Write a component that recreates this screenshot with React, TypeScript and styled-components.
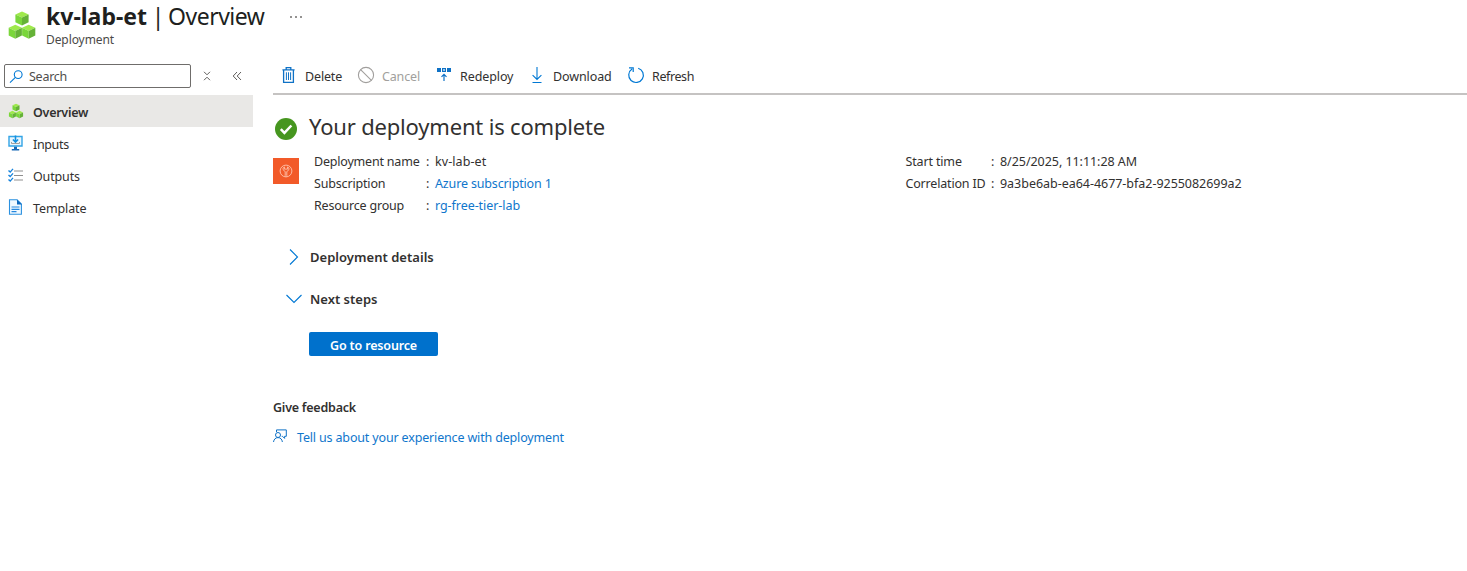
import React from 'react';
import styled, { createGlobalStyle } from 'styled-components';

const GlobalStyle = createGlobalStyle`
  * { box-sizing: border-box; }
  body {
    margin: 0;
    background: #fff;
    color: #323130;
    font-family: "Noto Sans", "Open Sans", sans-serif;
    font-size: 12.5px;
  }
`;

const blue = '#0078d4';
const link = '#0f76cc';

const Page = styled.div`
  height: 571px;
  overflow: hidden;
`;

const Header = styled.header`
  display: flex;
  height: 64px;
  padding: 0 0 0 7px;
`;

const HeaderIcon = styled.div`
  width: 39px;
  padding-top: 10px;
`;

const TitleRow = styled.div`
  display: flex;
  align-items: center;
  height: 32px;
`;

const Title = styled.h1`
  display: flex;
  width: 218px;
  margin: 0;
  font-size: 23px;
  font-weight: 400;
  line-height: 32px;
  white-space: pre;
  color: #201f1e;
`;

const Text = styled.span<{ $track?: number; $weight?: number }>`
  letter-spacing: ${(p) => p.$track ?? 0}px;
  font-weight: ${(p) => p.$weight ?? 400};
  white-space: pre;
`;

const Subtitle = styled.div`
  font-size: 12px;
  line-height: 16px;
  color: #4b4a48;
`;

const MoreButton = styled.span`
  display: flex;
  gap: 3px;
  margin: 1px 0 0 26px;
`;

const Dot = styled.i`
  width: 2px;
  height: 2px;
  border-radius: 1px;
  background: #706e6c;
`;

const Body = styled.div`
  display: flex;
`;

const Sidebar = styled.nav`
  width: 253px;
  flex: none;
`;

const SearchRow = styled.div`
  display: flex;
  align-items: center;
  height: 24px;
  margin: 0 0 7px 4px;
`;

const SearchBox = styled.div`
  display: flex;
  align-items: center;
  gap: 5px;
  width: 187px;
  height: 24px;
  padding-left: 4px;
  border: 1px solid #6f6d6b;
  border-radius: 2px;
  color: #4f4e4c;
`;

const SmallGlyph = styled.span<{ $left: number }>`
  display: flex;
  margin-left: ${(p) => p.$left}px;
`;

const NavItem = styled.div<{ $active?: boolean }>`
  display: flex;
  align-items: center;
  gap: 9px;
  height: 32px;
  padding: 2px 0 0 8px;
  background: ${(p) => (p.$active ? '#e9e8e6' : 'transparent')};
  svg { margin-top: -2px; }
`;

const Main = styled.main`
  flex: 1;
  padding-left: 20px;
`;

const Toolbar = styled.div`
  display: flex;
  height: 31px;
  padding-left: 8px;
  border-bottom: 2px solid #c5c3c2;
`;

const Command = styled.div<{ $width: number; $disabled?: boolean; $gap?: number }>`
  display: flex;
  align-items: center;
  gap: ${(p) => p.$gap ?? 8}px;
  width: ${(p) => p.$width}px;
  height: 24px;
  color: ${(p) => (p.$disabled ? '#a19f9d' : '#323130')};
  svg { flex: none; margin-top: -2px; }
`;

const StatusRow = styled.div`
  display: flex;
  align-items: center;
  gap: 12px;
  height: 36px;
  margin-top: 16px;
  padding-left: 2px;
`;

const Headline = styled.h2`
  margin: -6px 0 0;
  font-size: 22px;
  line-height: 32px;
  font-weight: 400;
`;

const Essentials = styled.section`
  display: flex;
  height: 85px;
  margin-top: 4px;
`;

const ResourceTile = styled.div`
  display: flex;
  align-items: center;
  justify-content: center;
  width: 26px;
  height: 26px;
  margin: 7px 15px 0 0;
  background: #f25a29;
`;

const Properties = styled.dl<{ $width?: number; $label: number }>`
  display: grid;
  grid-template-columns: ${(p) => p.$label}px 9px auto;
  grid-auto-rows: 22px;
  align-content: start;
  justify-content: start;
  width: ${(p) => (p.$width ? `${p.$width}px` : 'auto')};
  margin: 0;
  line-height: 22px;
  dt, dd { margin: 0; }
`;

const Link = styled.a`
  color: ${link};
`;

const Section = styled.div`
  display: flex;
  align-items: center;
  height: 42px;
  padding-left: 13px;
  gap: 8px;
  font-size: 13px;
  svg { flex: none; }
`;

const PrimaryButton = styled.button`
  display: flex;
  align-items: center;
  justify-content: center;
  width: 129px;
  height: 24px;
  margin: 12px 0 0 36px;
  padding: 2px 0 0;
  border: 0;
  border-radius: 2px;
  background: #0071cc;
  color: #fff;
  font: inherit;
`;

const FeedbackTitle = styled.h3`
  margin: 42px 0 0;
  font-size: 12.5px;
  line-height: 20px;
  font-weight: 600;
`;

const FeedbackRow = styled.div`
  display: flex;
  align-items: center;
  gap: 10px;
  height: 20px;
  margin-top: 9px;
  svg { margin-top: -3px; }
`;

const Cube = ({ x, y }: { x: number; y: number }) => (
  <g transform={`translate(${x} ${y})`}>
    <path d="M0 3 6.600 0l6.600 3-6.600 3.200z" fill="#9fe94c" />
    <path d="M0 3l6.600 3.200v7.800L0 10.800z" fill="#7ad63b" />
    <path d="M13.200 3 6.600 6.200v7.800l6.600-3.200z" fill="#65b237" />
  </g>
);

const Cubes = ({ size }: { size: number }) => (
  <svg width={size} height={size} viewBox="0 0 30 30">
    <Cube x={8.4} y={1.4} />
    <Cube x={1.7} y={14.7} />
    <Cube x={15.1} y={14.7} />
  </svg>
);

const SearchIcon = () => (
  <svg width="15" height="15" viewBox="0 0 15 15" fill="none" stroke={blue} strokeWidth="1.1">
    <circle cx="9.2" cy="5.6" r="3.9" />
    <path d="M6.4 8.4 1 13.6" />
  </svg>
);

const InputsIcon = () => (
  <svg width="16" height="16" viewBox="0 0 16 16">
    <path d="M1 1.500h13v9.500H1z" fill="#eaf6fd" stroke="#32a4e6" strokeWidth="1.4" />
    <path d="M7.500.5v6M4.900 4.500l2.600 2.600 2.600-2.600" fill="none" stroke="#1490df" strokeWidth="1.6" />
    <path d="M3.500 7v1.500h8V7" fill="none" stroke="#a19f9d" />
    <path d="M6 11.700h3v2.300h2.200v1.400H3.800V14H6z" fill="#1768b5" />
  </svg>
);

const OutputsIcon = () => (
  <svg width="16" height="16" viewBox="0 0 16 16" fill="none">
    <path d="M6 4h9M6 8.500h9M6 13h9" stroke="#8f8f8f" strokeWidth="1.2" />
    <path d="m.5 3.500 1.700 1.600L5 1.900M.5 8l1.700 1.600L5 6.400M.5 12.500l1.700 1.600L5 10.900" stroke="#1683dc" strokeWidth="1.4" />
  </svg>
);

const TemplateIcon = () => (
  <svg width="16" height="16" viewBox="0 0 16 16">
    <path d="M1.5.8H9L13.400 5v10.200H1.500z" fill="#f1f9ff" stroke="#2b91e0" strokeWidth="1.1" />
    <path d="M9 .5 13.900 5.500H9z" fill="#0f68bd" />
    <path d="M3.500 8h8M3.500 10.300h8M3.500 12.600h5" stroke="#2487df" strokeWidth="1.2" />
  </svg>
);

const TrashIcon = () => (
  <svg width="16" height="18" viewBox="0 0 16 18" fill="none" stroke="#0f72c6" strokeWidth="1.2">
    <path d="M1.4 3.9h12.2M5.200 3.700V1.700h4.600v2M2.600 4v12.400h9.800V4" strokeWidth="1.3" />
    <path d="M5.4 6.3v7.700M7.500 6.300v7.700M9.600 6.300v7.700" strokeWidth="1" />
  </svg>
);

const CancelIcon = () => (
  <svg width="18" height="18" viewBox="0 0 18 18" fill="none" stroke="#a19f9d" strokeWidth="1.1">
    <circle cx="9" cy="9" r="7.6" />
    <path d="m3.6 3.6 10.8 10.8" />
  </svg>
);

const RedeployIcon = () => (
  <svg width="16" height="16" viewBox="0 0 16 16">
    <path d="M1 1h4v4H1zM11 1h4v4h-4z" fill="#0f72c6" />
    <path d="M6.6 1.6h2.8v2.8H6.6zM8 14V7.6M5.5 9.8 8 7.3l2.5 2.5" fill="none" stroke="#0f72c6" strokeWidth="1.2" />
  </svg>
);

const DownloadIcon = () => (
  <svg width="16" height="18" viewBox="0 0 16 18" fill="none" stroke={blue} strokeWidth="1.1">
    <path d="M8 1v12.5M3.6 9.1 8 13.5l4.4-4.4M3.5 16.5h9" />
  </svg>
);

const RefreshIcon = () => (
  <svg width="18" height="18" viewBox="0 0 18 18" fill="none" stroke={blue} strokeWidth="1.2">
    <path d="M11.2 2.2A7.3 7.3 0 1 1 5 3.1M2 1.8h4.2V6" />
  </svg>
);

const SuccessIcon = () => (
  <svg width="22" height="22" viewBox="0 0 22 22">
    <circle cx="11" cy="11" r="11" fill="#46961f" />
    <path d="m5.8 11.2 3.6 3.7 7-7.4" fill="none" stroke="#fff" strokeWidth="2.5" />
  </svg>
);

const KeyVaultIcon = () => (
  <svg width="14" height="14" viewBox="0 0 14 14" fill="none" stroke="#ffc3ad" strokeWidth="0.9">
    <circle cx="7" cy="7" r="5.9" />
    <path d="M6.2 11.6V7.5C4.6 6.8 4 5.8 4.1 4.2L5.4 2.8v2.3h3.2V2.8l1.3 1.4c.1 1.6-.5 2.6-2.1 3.3v4.1L7 12.5z" />
  </svg>
);

const FeedbackIcon = () => (
  <svg width="14" height="14" viewBox="0 0 14 14" fill="none" stroke="#0f72c6" strokeWidth="1">
    <path d="M3.5 3V.9h9.8v6.4h-1.7v2.1L9.5 7.3h-.8" />
    <circle cx="5" cy="6" r="2.5" />
    <path d="M.5 13c.4-2.7 2-4.4 4.5-4.4S9 10.3 9.4 13" />
  </svg>
);

const App = () => (
  <Page>
    <GlobalStyle />
    <Header>
      <HeaderIcon><Cubes size={30} /></HeaderIcon>
      <div>
        <TitleRow>
          <Title>
            <Text $weight={700}>kv-lab-et</Text>
            <Text $track={-1.2}> | </Text>
            <Text $track={-0.5}>Overview</Text>
          </Title>
          <MoreButton><Dot /><Dot /><Dot /></MoreButton>
        </TitleRow>
        <Subtitle><Text $track={-0.08}>Deployment</Text></Subtitle>
      </div>
    </Header>
    <Body>
      <Sidebar>
        <SearchRow>
          <SearchBox><SearchIcon /><Text $track={-0.25}>Search</Text></SearchBox>
          <SmallGlyph $left={12}>
            <svg width="8" height="10" viewBox="0 0 8 10" fill="none" stroke="#605e5c"><path d="m1 .8 3 3 3-3M1 9.2l3-3 3 3" /></svg>
          </SmallGlyph>
          <SmallGlyph $left={21}>
            <svg width="10" height="10" viewBox="0 0 10 10" fill="none" stroke="#605e5c"><path d="M5 1 1.2 5 5 9M9 1 5.2 5 9 9" /></svg>
          </SmallGlyph>
        </SearchRow>
        <NavItem $active><Cubes size={16} /><Text $weight={600} $track={-0.27}>Overview</Text></NavItem>
        <NavItem><InputsIcon /><Text $track={-0.35}>Inputs</Text></NavItem>
        <NavItem><OutputsIcon /><Text $track={-0.15}>Outputs</Text></NavItem>
        <NavItem><TemplateIcon /><Text $track={-0.12}>Template</Text></NavItem>
      </Sidebar>
      <Main>
        <Toolbar>
          <Command $width={76}><TrashIcon /><Text $track={-0.15}>Delete</Text></Command>
          <Command $width={79} $gap={7} $disabled><CancelIcon /><Text $track={-0.15}>Cancel</Text></Command>
          <Command $width={93}><RedeployIcon /><Text $track={-0.1}>Redeploy</Text></Command>
          <Command $width={98}><DownloadIcon /><Text $track={-0.1}>Download</Text></Command>
          <Command $width={80} $gap={7}><RefreshIcon /><Text $track={-0.4}>Refresh</Text></Command>
        </Toolbar>
        <StatusRow>
          <SuccessIcon />
          <Headline><Text $track={-0.18}>Your deployment is complete</Text></Headline>
        </StatusRow>
        <Essentials>
          <ResourceTile><KeyVaultIcon /></ResourceTile>
          <Properties $width={591.5} $label={112}>
            <dt><Text $track={-0.2}>Deployment name</Text></dt><span>:</span><dd><Text $track={0.08}>kv-lab-et</Text></dd>
            <dt><Text $track={-0.17}>Subscription</Text></dt><span>:</span><dd><Link><Text $track={-0.15}>Azure subscription 1</Text></Link></dd>
            <dt><Text $track={-0.2}>Resource group</Text></dt><span>:</span><dd><Link><Text $track={-0.06}>rg-free-tier-lab</Text></Link></dd>
          </Properties>
          <Properties $label={85.5}>
            <dt><Text $track={-0.15}>Start time</Text></dt><span>:</span><dd><Text $track={-0.05}>8/25/2025, 11:11:28 AM</Text></dd>
            <dt><Text $track={-0.18}>Correlation ID</Text></dt><span>:</span><dd><Text $track={-0.03}>9a3be6ab-ea64-4677-bfa2-9255082699a2</Text></dd>
          </Properties>
        </Essentials>
        <Section>
          <svg width="16" height="16" viewBox="0 0 16 16" fill="none" stroke={blue} strokeWidth="1.1"><path d="m4 .5 7.5 7.5L4 15.5" /></svg>
          <Text $weight={600} $track={0.03}>Deployment details</Text>
        </Section>
        <Section>
          <svg width="16" height="16" viewBox="0 0 16 16" fill="none" stroke={blue} strokeWidth="1.1"><path d="m.5 4 7.5 7.5L15.5 4" /></svg>
          <Text $weight={600}>Next steps</Text>
        </Section>
        <PrimaryButton><Text $weight={600} $track={-0.15}>Go to resource</Text></PrimaryButton>
        <FeedbackTitle><Text $weight={600} $track={-0.23}>Give feedback</Text></FeedbackTitle>
        <FeedbackRow><FeedbackIcon /><Link><Text $track={-0.16}>Tell us about your experience with deployment</Text></Link></FeedbackRow>
      </Main>
    </Body>
  </Page>
);

export default App;
